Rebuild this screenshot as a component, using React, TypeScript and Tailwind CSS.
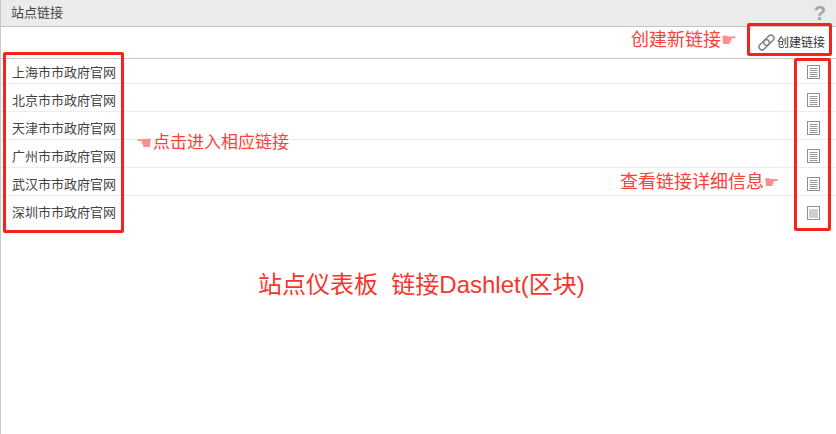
const sites = ['上海市市政府官网', '北京市市政府官网', '天津市市政府官网', '广州市市政府官网', '武汉市市政府官网', '深圳市市政府官网']

const cjk = "font-['Liberation_Sans','Noto_Sans_CJK_SC',sans-serif]"

function LinkIcon() {
  return (
    <svg width="17" height="17" viewBox="0 0 17 17" fill="none" stroke="#808080" strokeWidth="1.5" className="shrink-0">
      <rect x="7.8" y="0.2" width="6" height="12" rx="3" transform="rotate(45 10.8 6.2)" />
      <rect x="3.2" y="4.8" width="6" height="12" rx="3" transform="rotate(45 6.2 10.8)" />
    </svg>
  )
}

function DocIcon({ filled }: { filled?: boolean }) {
  return (
    <svg width="13" height="14" viewBox="0 0 13 14" className="shrink-0">
      <rect x="0.5" y="0.5" width="12" height="13" fill="#fff" stroke="#8f8f8f" />
      {filled ? (
        <rect x="2" y="3" width="9" height="9" fill="#cfcfcf" />
      ) : (
        <path d="M2.5 3.5h8M2.5 5.5h8M2.5 7.5h8M2.5 9.5h8M2.5 11.5h8" stroke="#9a9a9a" />
      )}
    </svg>
  )
}

function SiteRow({ name, last }: { name: string; last: boolean }) {
  return (
    <li className={`flex h-[28px] items-center justify-between pl-[11px] pr-[16px] pt-[5px] first:h-[25px] first:pt-[2px] ${last ? '' : 'border-b border-[#ececec]'}`}>
      <a className="pt-[1px] text-[13px] text-[#444]">{name}</a>
      <DocIcon filled={last} />
    </li>
  )
}

export default function App() {
  return (
    <div className={`relative h-[434px] w-[836px] overflow-hidden bg-white ${cjk}`}>
      <div className="h-full border-l border-[#c8c8c8]">
        <header className="flex h-[27px] items-center justify-between border-b border-[#c4c4c4] bg-[#ebebeb] pl-[10px] pr-[10px]">
          <h2 className="text-[13px] text-[#444]">站点链接</h2>
          <span className="text-[20px] font-bold leading-none text-[#a3a3a3]">?</span>
        </header>

        <div className="flex h-[32px] items-center justify-end border-b border-[#c8c8c8] pr-[11px]">
          <button className="flex items-center gap-[2px] text-[12px] text-[#333]">
            <LinkIcon />
            创建链接
          </button>
        </div>

        <ul>
          {sites.map((s, i) => (
            <SiteRow key={s} name={s} last={i === sites.length - 1} />
          ))}
        </ul>
      </div>

      {/* red annotations drawn over the screenshot */}
      <div className="absolute left-[3px] top-[52px] h-[181px] w-[121px] rounded-[2px] border-[3px] border-[#f5231c]" />
      <div className="absolute left-[747px] top-[23px] h-[33px] w-[85px] rounded-[2px] border-[3px] border-[#f5231c]" />
      <div className="absolute left-[794px] top-[58px] h-[173px] w-[37px] rounded-[2px] border-[3px] border-[#f5231c]" />

      <p className="absolute left-[631px] top-[28px] flex items-center text-[18px] leading-[24px] text-[#f8423a]">
        创建新链接<span className="font-['DejaVu_Sans'] text-[18px] leading-none text-[#f9908b]">☛</span>
      </p>
      <p className="absolute left-[136px] top-[132px] flex items-center text-[17px] leading-[22px] text-[#f8423a]">
        <span className="w-[17px] font-['DejaVu_Sans'] text-[18px] leading-none text-[#f9908b]">☚</span>点击进入相应链接
      </p>
      <p className="absolute left-[620px] top-[171px] flex items-center text-[18px] leading-[22px] text-[#f8423a]">
        查看链接详细信息<span className="font-['DejaVu_Sans'] text-[17px] leading-none text-[#f9908b]">☛</span>
      </p>
      <p className="absolute left-[258px] top-[270px] whitespace-pre text-[24px] leading-[30px] text-[#f8352c]">站点仪表板  链接Dashlet(区块)</p>
    </div>
  )
}
